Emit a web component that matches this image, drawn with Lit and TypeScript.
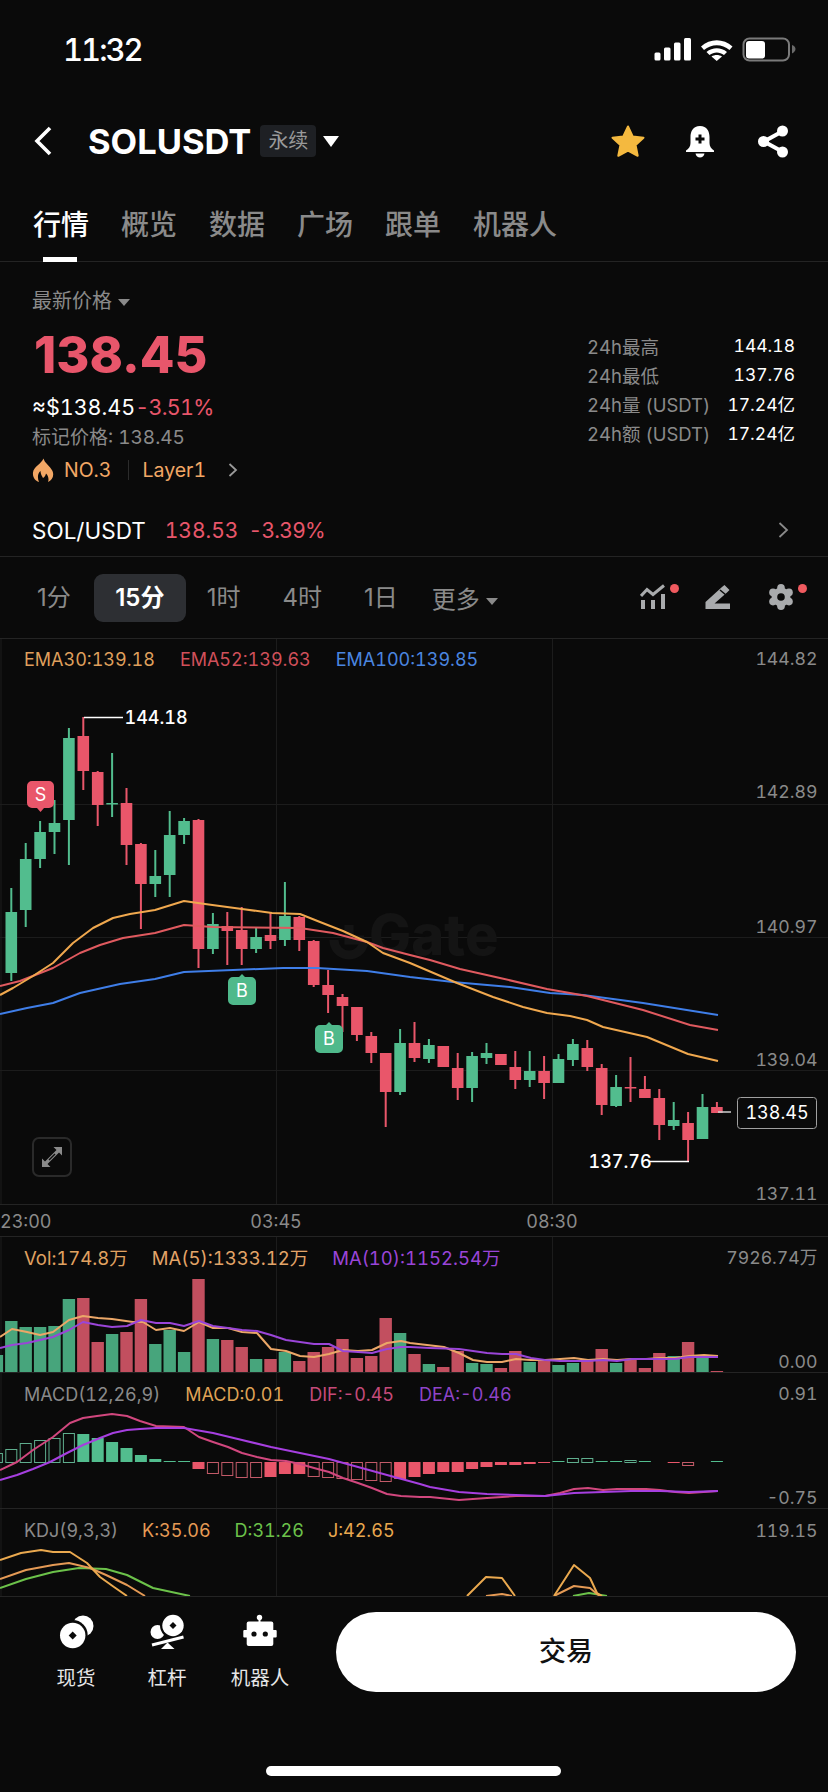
import { css, html, svg, LitElement } from "lit";
import { customElement } from "lit/decorators.js";

const UP = "#52bd8e";
const DOWN = "#e9566a";
const slotX = (i: number) => 11.3 + 14.4 * i;

// high, body top, body bottom, low, colour; index -1 is the cut off candle at the left edge
type Candle = [number, number, number, number, "g" | "r"];
const candles: Candle[] = [
  [888, 912, 973, 981, "g"], [843, 859, 910, 927, "g"], [821, 832, 859, 868, "g"], [800, 823, 832, 854, "g"],
  [728, 738, 820, 865, "g"], [717, 736, 771, 790, "r"], [771, 772, 805, 826, "r"], [753, 803, 804, 817, "g"],
  [788, 803, 845, 865, "r"], [843, 844, 884, 929, "r"], [850, 876, 884, 897, "g"], [811, 835, 875, 897, "g"],
  [818, 821, 835, 844, "g"], [819, 820, 949, 968, "r"], [913, 924, 949, 954, "g"], [912, 926, 931, 965, "r"],
  [907, 930, 949, 965, "r"], [927, 937, 949, 953, "g"], [913, 935, 941, 949, "r"], [882, 916, 940, 946, "g"],
  [916, 917, 940, 951, "r"], [940, 941, 985, 987, "r"], [970, 985, 995, 1013, "r"], [994, 997, 1006, 1032, "r"],
  [1007, 1007, 1035, 1041, "r"], [1032, 1036, 1053, 1063, "r"], [1053, 1053, 1092, 1127, "r"], [1029, 1043, 1092, 1095, "g"],
  [1022, 1043, 1058, 1062, "r"], [1039, 1045, 1059, 1063, "g"], [1046, 1046, 1067, 1067, "r"], [1053, 1068, 1088, 1100, "r"],
  [1052, 1056, 1088, 1102, "g"], [1043, 1053, 1058, 1064, "g"], [1054, 1054, 1065, 1065, "r"], [1051, 1067, 1080, 1089, "r"],
  [1051, 1071, 1080, 1087, "g"], [1056, 1071, 1083, 1099, "r"], [1054, 1059, 1083, 1083, "g"], [1039, 1044, 1060, 1066, "g"],
  [1040, 1048, 1067, 1071, "r"], [1064, 1068, 1105, 1115, "r"], [1075, 1087, 1106, 1107, "g"], [1057, 1087, 1088, 1102, "r"],
  [1076, 1089, 1098, 1098, "r"], [1089, 1098, 1125, 1140, "r"], [1102, 1120, 1126, 1130, "g"], [1112, 1123, 1140, 1161, "r"],
  [1094, 1107, 1139, 1139, "g"], [1102, 1107, 1113, 1113, "r"],
];

const ema30 = "0,995 13,988 33,976 53,963 73,943 93,928 113,918 130,914 155,910 184,901 205,904 242,909 272,913 300,914 320,922 343,931 367,942 383,953 410,963 457,983 493,997 523,1007 547,1013 570,1016 587,1020 603,1027 647,1037 688,1054 718,1061";
const ema52 = "0,986 20,981 53,968 80,953 100,945 123,938 155,933 184,925 213,927 300,928 333,933 367,942 383,948 410,955 430,960 460,969 500,978 547,989 587,996 643,1010 690,1025 718,1030";
const ema100 = "0,1014 27,1008 53,1003 80,993 120,984 155,979 184,972 233,970 283,968 317,968 367,971 410,977 453,982 510,987 550,993 583,995 643,1003 718,1015";

// volume bar tops, from slot -1 on
const volTops: [number, "g" | "r"][] = [
  [1355, "g"], [1321, "g"], [1327, "g"], [1327, "g"], [1326, "g"], [1299, "g"], [1298, "r"], [1342, "r"], [1334, "g"], [1332, "r"],
  [1299, "r"], [1344, "g"], [1330, "g"], [1352, "g"], [1279, "r"], [1339, "g"], [1340, "r"], [1347, "r"], [1359, "g"], [1359, "r"],
  [1352, "g"], [1361, "r"], [1352, "r"], [1347, "r"], [1339, "r"], [1358, "r"], [1356, "r"], [1318, "r"], [1333, "g"], [1354, "r"],
  [1364, "g"], [1367, "r"], [1351, "r"], [1363, "g"], [1364, "g"], [1368, "r"], [1351, "r"], [1362, "g"], [1360, "r"], [1365, "g"],
  [1363, "g"], [1360, "r"], [1349, "r"], [1363, "g"], [1359, "r"], [1368, "r"], [1353, "r"], [1356, "g"], [1342, "r"], [1358, "g"], [1371, "r"],
];
const volMa5 = "0,1337 12,1329 27,1332 40,1335 53,1332 69,1320 83,1316 98,1318 112,1319 133,1322 143,1322 156,1330 170,1328 184,1331 199,1322 213,1328 228,1328 242,1332 257,1333 271,1349 286,1351 300,1356 314,1357 329,1354 343,1350 358,1351 372,1350 387,1343 401,1341 410,1343 427,1345 444,1347 459,1353 473,1360 487,1362 502,1362 516,1359 531,1360 545,1360 560,1359 574,1358 588,1360 603,1359 617,1360 632,1359 646,1359 660,1358 675,1358 689,1356 704,1355 718,1356";
const volMa10 = "0,1348 12,1345 27,1343 40,1340 53,1337 69,1330 83,1322 98,1325 112,1327 127,1326 141,1320 156,1323 170,1323 184,1326 199,1321 213,1326 228,1328 242,1330 257,1331 271,1335 286,1340 300,1342 314,1344 329,1344 343,1351 358,1352 372,1353 387,1349 401,1347 410,1347 430,1348 459,1349 473,1351 487,1353 502,1354 516,1354 531,1358 545,1360 560,1361 574,1361 588,1361 603,1360 617,1361 632,1359 646,1359 660,1359 675,1359 689,1357 704,1357 718,1357";

// macd histogram: slot, y edge away from the zero line, hollow
const macdBars: [number, number, boolean][] = [
  [-1, 1453, true], [0, 1449, true], [1, 1443, true], [2, 1440, true], [3, 1438, true], [4, 1433, true], [5, 1434, false], [6, 1438, false],
  [7, 1442, false], [8, 1448, false], [9, 1455, false], [10, 1459, false], [11, 1461, false], [12, 1461, false],
  [13, 1469, false], [14, 1473, true], [15, 1475, true], [16, 1477, true], [17, 1477, true], [18, 1477, false], [19, 1474, false], [20, 1474, false],
  [21, 1476, true], [22, 1477, true], [23, 1478, true], [24, 1479, true], [25, 1480, true], [26, 1481, true], [27, 1479, false], [28, 1477, false],
  [29, 1474, false], [30, 1472, false], [31, 1472, false], [32, 1469, false], [33, 1467, false], [34, 1465, false], [35, 1465, false], [36, 1464, false], [37, 1463, false],
  [38, 1461, false], [39, 1458, true], [40, 1458, true], [41, 1461, false], [42, 1461, false], [43, 1460, true], [44, 1461, false],
  [46, 1463, false], [47, 1465, true], [49, 1461, false],
];
const macdDif = "0,1470 17,1462 33,1450 53,1437 70,1423 83,1418 97,1416 112,1414 127,1416 140,1421 156,1426 184,1427 199,1437 213,1442 228,1447 242,1453 257,1457 271,1460 286,1461 300,1464 314,1468 329,1472 343,1478 358,1483 372,1488 387,1494 401,1496 420,1497 430,1497 459,1500 487,1498 516,1496 545,1496 560,1493 574,1489 588,1488 603,1490 617,1489 646,1489 660,1490 675,1492 689,1493 718,1491";
const macdDea = "0,1480 17,1475 33,1469 50,1462 67,1453 83,1445 100,1438 113,1433 127,1430 140,1429 156,1428 184,1428 213,1433 242,1440 271,1447 300,1453 329,1459 358,1467 387,1475 420,1484 430,1487 459,1492 487,1494 516,1495 545,1496 574,1493 603,1492 631,1491 660,1491 689,1492 718,1491";

const kdjJ = ["0,1560 21,1553 41,1550 53,1552 70,1552 87,1563 100,1577 114,1587 127,1596", "467,1596 486,1577 502,1578 515,1596", "554,1596 574,1565 590,1578 597,1593 602,1596"];
const kdjK = ["0,1579 26,1570 53,1565 69,1563 90,1568 106,1575 127,1585 145,1596", "486,1596 502,1594 512,1596", "554,1596 574,1586 590,1588 597,1594 600,1596"];
const kdjD = ["0,1588 26,1579 53,1572 79,1568 106,1569 127,1575 153,1588 190,1596", "573,1596 589,1593 607,1596"];

@customElement("app-root")
export class AppRoot extends LitElement {
  renderStatus() {
    return html`
      <div class="status">
        <span class="clock">11:32</span>
        <svg width="142" height="26" viewBox="653 37 142 26">
          <g fill="#fff">
            <rect x="653.5" y="52.5" width="6" height="8" rx="1.5" />
            <rect x="663" y="47.5" width="6.5" height="13" rx="1.5" />
            <rect x="673" y="42.5" width="6.5" height="18" rx="1.5" />
            <rect x="683" y="38" width="7" height="22.5" rx="1.5" />
            <path d="M700 46.5C709 38 722.500 38 731.500 46.500L728.500 50C721 43.500 710.500 43.500 703 50Z" />
            <path d="M705.500 52C711.500 47 720 47 726 52L723 55C718.500 51.500 713 51.500 708.500 55Z" />
            <path d="M710.500 56.500C713.500 54.500 718 54.500 721 56.500L715.700 61Z" />
            <rect x="745" y="41" width="19" height="17.500" rx="3" />
          </g>
          <rect x="742.500" y="38.500" width="45.500" height="22" rx="6" fill="none" stroke="#7a7a7a" stroke-width="2" />
          <path d="M791 45C793.500 46 794.500 47.500 794.500 49S793.500 52 791 53.500Z" fill="#6a6a6a" />
        </svg>
      </div>
    `;
  }

  renderHeader() {
    return html`
      <div class="header">
        <svg class="back" width="20" height="30" viewBox="0 0 20 30">
          <path d="M17 2L4 15L17 28" fill="none" stroke="#fff" stroke-width="3.600" />
        </svg>
        <span class="symbol">SOLUSDT</span>
        <span class="badge">永续</span>
        <span class="caret big"></span>
        <span class="spacer"></span>
        <svg width="34" height="33" viewBox="0 0 34 33">
          <path d="M17 1.500L21.700 11.400L32.500 12.700L24.600 20.100L26.700 30.800L17 25.500L7.300 30.800L9.400 20.100L1.500 12.700L12.300 11.400Z" fill="#f4b93f" stroke="#f4b93f" stroke-width="2" stroke-linejoin="round" />
        </svg>
        <svg class="bell" width="30" height="33" viewBox="0 0 30 33">
          <path d="M15 1C22 1 24.500 6.500 24.500 12V18C24.500 21 26 23.500 29 25.500V27H1V25.500C4 23.500 5.500 21 5.500 18V12C5.500 6.500 8 1 15 1Z" fill="#fff" />
          <path d="M10.500 28.500H19.500C19 31 17.200 32.500 15 32.500S11 31 10.500 28.500Z" fill="#fff" />
          <path d="M15 9.500V18.500M10.500 14H19.500" stroke="#0a0a0a" stroke-width="3" />
        </svg>
        <svg class="share" width="32" height="33" viewBox="0 0 32 33">
          <path d="M26 6L7 16.500L26 27" fill="none" stroke="#fff" stroke-width="4" />
          <circle cx="25.500" cy="6" r="5.500" fill="#fff" />
          <circle cx="6.500" cy="16.500" r="5.500" fill="#fff" />
          <circle cx="25.500" cy="27" r="5.500" fill="#fff" />
        </svg>
      </div>
    `;
  }

  renderTabs() {
    const tabs = ["行情", "概览", "数据", "广场", "跟单", "机器人"];
    return html`
      <div class="tabs">
        ${tabs.map((t, i) => html`<span class="tab ${i === 0 ? "on" : ""}">${t}</span>`)}
      </div>
    `;
  }

  renderInfo() {
    const stats = [
      ["24h最高", "144.18"],
      ["24h最低", "137.76"],
      ["24h量 (USDT)", "17.24亿"],
      ["24h额 (USDT)", "17.24亿"],
    ];
    return html`
      <div class="info">
        <div class="info-left">
          <div class="latest">最新价格<span class="caret small"></span></div>
          <div class="price">138.45</div>
          <div class="usd">≈$138.45<span class="red pct">-3.51%</span></div>
          <div class="mark">标记价格: 138.45</div>
          <div class="tags">
            <svg width="22" height="24" viewBox="0 0 22 24">
              <path d="M11.500 0.500C12.500 5 18 8 20.500 13C22.500 18 20 22 16 24C17 21 16.500 18 14 15.500C13.500 18 12.500 19 11 20C10 18 8.500 16 8.500 13C6 15 5 19 7 24C3 22.500 0.500 19 1 14.500C1.500 9 9 6 11.500 0.500Z" fill="#f2a765" />
            </svg>
            <span class="no">NO.3</span>
            <span class="sep"></span>
            <span>Layer1</span>
            <svg class="tag-arrow" width="10" height="14" viewBox="0 0 10 14">
              <path d="M1.500 1L8 7L1.500 13" fill="none" stroke="#9a9a9a" stroke-width="1.800" />
            </svg>
          </div>
        </div>
        <div class="stats">
          ${stats.map(
            ([k, v]) => html`<div class="stat"><span class="k">${k}</span><span class="v">${v}</span></div>`
          )}
        </div>
      </div>
    `;
  }

  renderMarket() {
    return html`
      <div class="market">
        <span class="pair">SOL/USDT</span>
        <span class="red">138.53</span>
        <span class="red pct">-3.39%</span>
        <span class="spacer"></span>
        <svg width="11" height="16" viewBox="0 0 11 16">
          <path d="M1.500 1L9 8L1.500 15" fill="none" stroke="#8a8a8a" stroke-width="1.800" />
        </svg>
      </div>
    `;
  }

  renderToolbar() {
    return html`
      <div class="toolbar">
        <span class="tf">1分</span>
        <span class="tf active">15分</span>
        <span class="tf">1时</span>
        <span class="tf">4时</span>
        <span class="tf">1日</span>
        <span class="more">更多<span class="caret small"></span></span>
        <span class="spacer"></span>
        <span class="tool t1">
          <svg width="26" height="26" viewBox="0 0 26 26">
            <path d="M1 12L7 5.500L13 10.500L24 1.500" fill="none" stroke="#a9abad" stroke-width="3" />
            <path d="M3 16V25M13 16V25M23 10V25" fill="none" stroke="#a9abad" stroke-width="4" />
          </svg>
          <i class="dot"></i>
        </span>
        <span class="tool t2">
          <svg width="26" height="26" viewBox="0 0 26 26">
            <path d="M0.500 24V18L17 3L19.500 1L24.500 6L22 8.500L9.500 19.500H25V25H0.500Z" fill="#a9abad" />
            <path d="M15 6L21 11" stroke="#0a0a0a" stroke-width="1.500" />
          </svg>
        </span>
        <span class="tool t3">
          <svg width="26" height="26" viewBox="0 0 26 26">
            <g fill="#a9abad">
              <circle cx="13" cy="13" r="9.500" />
              <circle cx="13" cy="3.800" r="3.800" />
              <circle cx="13" cy="22.200" r="3.800" />
              <circle cx="5" cy="8.400" r="3.800" />
              <circle cx="21" cy="8.400" r="3.800" />
              <circle cx="5" cy="17.600" r="3.800" />
              <circle cx="21" cy="17.600" r="3.800" />
            </g>
            <circle cx="13" cy="13" r="3.800" fill="#0a0a0a" />
          </svg>
          <i class="dot"></i>
        </span>
      </div>
    `;
  }

  renderCandles() {
    return candles.map(([hi, top, bottom, lo, c], i) => {
      const x = slotX(i);
      const col = c === "g" ? UP : DOWN;
      return svg`
        <line x1=${x} x2=${x} y1=${hi} y2=${lo} stroke=${col} stroke-width="2" />
        <rect x=${x - 5.8} y=${top} width="11.600" height=${Math.max(bottom - top, 1.5)} fill=${col} />
      `;
    });
  }

  renderMainChart() {
    return html`
      <div class="panel main">
        <svg width="828" height="565" viewBox="0 639 828 565">
          <g class="grid">
            <path d="M0 804.500H828M0 937.500H828M0 1070.500H828M276.500 639V1204M552.500 639V1204M1 639V1204" />
          </g>
          <g>
            <path d="M334 940A15 15 0 0 0 364 940" fill="none" stroke="#141414" stroke-width="9" />
            <path d="M349 925V940H364" fill="none" stroke="#141414" stroke-width="9" />
            <text x="369" y="955" class="watermark">Gate</text>
          </g>
          ${this.renderCandles()}
          <polyline points=${ema100} class="ln" stroke="#3f7ee8" />
          <polyline points=${ema52} class="ln" stroke="#e05a5f" />
          <polyline points=${ema30} class="ln" stroke="#f0a84e" />

          <path d="M84 717.500H123" stroke="#fff" stroke-width="1.500" />
          <text x="124.500" y="717.500" class="note">144.18</text>
          <path d="M649 1161.500H689" stroke="#fff" stroke-width="1.500" />
          <text x="588.500" y="1161.500" class="note">137.76</text>

          <path d="M32 781H49A5 5 0 0 1 54 786V803A5 5 0 0 1 49 808H44L40.500 812L37 808H32A5 5 0 0 1 27 803V786A5 5 0 0 1 32 781Z" fill=${DOWN} />
          <text x="40.500" y="794.500" class="tag-text">S</text>
          <path d="M233 977H239L242 974L245 977H251A5 5 0 0 1 256 982V1000A5 5 0 0 1 251 1005H233A5 5 0 0 1 228 1000V982A5 5 0 0 1 233 977Z" fill="#4fb98b" />
          <text x="242" y="990.500" class="tag-text">B</text>
          <path d="M320 1025H326L329 1022L332 1025H338A5 5 0 0 1 343 1030V1048A5 5 0 0 1 338 1053H320A5 5 0 0 1 315 1048V1030A5 5 0 0 1 320 1025Z" fill="#4fb98b" />
          <text x="329" y="1038.500" class="tag-text">B</text>

          <text x="817.500" y="658" class="axis">144.82</text>
          <text x="817.500" y="791" class="axis">142.89</text>
          <text x="817.500" y="926" class="axis">140.97</text>
          <text x="817.500" y="1059" class="axis">139.04</text>
          <text x="817.500" y="1193" class="axis">137.11</text>

          <path d="M718 1112H731" stroke="#cfcfcf" stroke-width="1.500" />
          <rect x="737.500" y="1097.500" width="79" height="31" rx="3" fill="#0a0a0a" stroke="#a0a0a0" />
          <text x="777" y="1112.500" class="tag-text">138.45</text>
        </svg>
        <div class="legend">
          <span style="color:#df9f5c">EMA30:139.18</span>
          <span style="color:#d0505a">EMA52:139.63</span>
          <span style="color:#4a86e0">EMA100:139.85</span>
        </div>
        <div class="expand">
          <svg width="22" height="22" viewBox="0 0 22 22">
            <path d="M12.500 1H21V9.500L18 6.500L6.500 18L9.500 21H1V12.500L4 15.500L15.500 4Z" fill="#8a8a8a" />
            <path d="M8 14L14 8" stroke="#0a0a0a" stroke-width="1.500" />
          </svg>
        </div>
      </div>
    `;
  }

  renderTimeAxis() {
    return html`
      <div class="time-axis">
        <span class="t0">23:00</span>
        <span>03:45</span>
        <span>08:30</span>
      </div>
    `;
  }

  renderVolume() {
    return html`
      <div class="panel vol">
        <svg width="828" height="135" viewBox="0 1237 828 135">
          <path class="grid-p" d="M276.500 1237V1372M552.500 1237V1372M1 1237V1372" />
          ${volTops.map(([top, c], i) => {
            const x = slotX(i - 1) - 6.2;
            return svg`<rect x=${x} y=${top} width="12.400" height=${1372 - top} fill=${c === "g" ? "#47a57c" : "#c24f5f"} />`;
          })}
          <polyline points=${volMa5} class="ln" stroke="#eba768" />
          <polyline points=${volMa10} class="ln" stroke="#9a45d8" />
          <text x="817.500" y="1257" class="axis">7926.74万</text>
          <text x="817.500" y="1361" class="axis">0.00</text>
        </svg>
        <div class="legend">
          <span style="color:#e0a261">Vol:174.8万</span>
          <span style="color:#e3a468">MA(5):1333.12万</span>
          <span style="color:#9a45d8">MA(10):1152.54万</span>
        </div>
      </div>
    `;
  }

  renderMacd() {
    return html`
      <div class="panel macd">
        <svg width="828" height="135" viewBox="0 1373 828 135">
          <path class="grid-p" d="M276.500 1373V1508M552.500 1373V1508M1 1373V1508" />
          ${macdBars.map(([slot, edge, hollow]) => {
            const x = slotX(slot) - 6;
            const up = edge < 1462;
            const col = up ? UP : DOWN;
            const y = up ? edge : 1462;
            const h = Math.max(Math.abs(edge - 1462), 1);
            return hollow
              ? svg`<rect x=${x + 0.5} y=${y + 0.5} width="11" height=${h} fill="none" stroke=${up ? "#5fae8e" : "#c25a68"} />`
              : svg`<rect x=${x} y=${y} width="12" height=${h} fill=${col} />`;
          })}
          <polyline points=${macdDif} class="ln" stroke="#d1477e" />
          <polyline points=${macdDea} class="ln" stroke="#a63fe0" />
          <text x="817.500" y="1393" class="axis">0.91</text>
          <text x="817.500" y="1497" class="axis">-0.75</text>
        </svg>
        <div class="legend">
          <span style="color:#8a8a8a">MACD(12,26,9)</span>
          <span style="color:#dfa256">MACD:0.01</span>
          <span style="color:#c44a7a">DIF:-0.45</span>
          <span style="color:#8e44c8">DEA:-0.46</span>
        </div>
      </div>
    `;
  }

  renderKdj() {
    return html`
      <div class="panel kdj">
        <svg width="828" height="87" viewBox="0 1509 828 87">
          <path class="grid-p" d="M276.500 1509V1596M552.500 1509V1596M1 1509V1596" />
          ${kdjD.map((p) => svg`<polyline points=${p} class="ln" stroke="#6cc24a" />`)}
          ${kdjK.map((p) => svg`<polyline points=${p} class="ln" stroke="#e59a55" />`)}
          ${kdjJ.map((p) => svg`<polyline points=${p} class="ln" stroke="#eaa94f" />`)}
          <text x="817.500" y="1530" class="axis">119.15</text>
        </svg>
        <div class="legend">
          <span style="color:#8a8a8a">KDJ(9,3,3)</span>
          <span style="color:#e59a55">K:35.06</span>
          <span style="color:#6cc24a">D:31.26</span>
          <span style="color:#e9a84f">J:42.65</span>
        </div>
      </div>
    `;
  }

  renderBottom() {
    return html`
      <div class="bottom">
        <div class="actions">
          <div class="action a1">
            <svg width="36" height="36" viewBox="58 1615 36 36">
              <circle cx="83" cy="1627" r="10.500" fill="#fff" />
              <circle cx="72.700" cy="1636" r="15" fill="#0a0a0a" />
              <circle cx="72.700" cy="1636.500" r="12.700" fill="#fff" />
              <path d="M72.700 1632.500L76.700 1636.500L72.700 1640.500L68.700 1636.500Z" fill="#0a0a0a" />
            </svg>
            <span>现货</span>
          </div>
          <div class="action a2">
            <svg width="36" height="36" viewBox="150 1615 36 36">
              <circle cx="158.500" cy="1633" r="7" fill="#fff" />
              <circle cx="174" cy="1626.500" r="13" fill="#0a0a0a" />
              <circle cx="174" cy="1626.500" r="10.700" fill="#fff" />
              <path d="M174 1623L177.500 1626.500L174 1630L170.500 1626.500Z" fill="#0a0a0a" />
              <path d="M153 1646L184.500 1638" stroke="#fff" stroke-width="3" />
              <path d="M168.500 1643.500L175.500 1650H162Z" fill="#fff" />
            </svg>
            <span>杠杆</span>
          </div>
          <div class="action a3">
            <svg width="36" height="36" viewBox="242 1614 36 36">
              <circle cx="259.500" cy="1617.500" r="2.700" fill="#fff" />
              <path d="M258.500 1618H260.500V1622H258.500Z" fill="#fff" />
              <rect x="246.700" y="1621.500" width="26.600" height="24.500" rx="2" fill="#fff" />
              <rect x="243.300" y="1630" width="33.400" height="7.500" rx="1" fill="#fff" />
              <circle cx="254" cy="1634" r="2.600" fill="#0a0a0a" />
              <circle cx="265.300" cy="1634" r="2.600" fill="#0a0a0a" />
            </svg>
            <span>机器人</span>
          </div>
          <div class="trade">交易</div>
        </div>
        <div class="home"></div>
      </div>
    `;
  }

  render() {
    return html`
      ${this.renderStatus()} ${this.renderHeader()} ${this.renderTabs()} ${this.renderInfo()}
      ${this.renderMarket()} ${this.renderToolbar()} ${this.renderMainChart()} ${this.renderTimeAxis()}
      ${this.renderVolume()} ${this.renderMacd()} ${this.renderKdj()} ${this.renderBottom()}
    `;
  }

  static styles = css`
    :host {
      display: block;
      width: 828px;
      height: 1792px;
      overflow: hidden;
      background: #0a0a0a;
      color: #fff;
      font-family: Inter, "Noto Sans CJK SC", sans-serif;
      font-variant-numeric: tabular-nums;
      --line: #242424;
      --muted: #8a8a8a;
      --red: #e8566b;
    }
    svg {
      display: block;
      flex: none;
    }
    .spacer {
      flex: 1;
    }
    .red {
      color: var(--red);
    }
    .pct {
      letter-spacing: -0.7px;
    }
    .caret {
      display: inline-block;
      width: 0;
      height: 0;
      border-style: solid;
      border-color: currentColor transparent transparent;
    }
    .caret.big {
      margin-left: 7px;
      border-width: 11px 8px 0;
      color: #fff;
    }
    .caret.small {
      margin-left: 6px;
      border-width: 7px 6px 0;
      vertical-align: middle;
    }

    .status {
      height: 100px;
      box-sizing: border-box;
      padding: 36px 0 0 63px;
      display: flex;
      justify-content: space-between;
    }
    .clock {
      font-size: 31px;
      font-weight: 500;
      line-height: 28px;
      letter-spacing: -2px;
    }
    .status svg {
      margin: 1px 32px 0 0;
    }

    .header {
      height: 80px;
      box-sizing: border-box;
      padding: 2px 39px 0 33px;
      display: flex;
      align-items: center;
    }
    .symbol {
      margin-left: 35px;
      font-size: 34.500px;
      font-weight: 700;
    }
    .badge {
      margin-left: 9px;
      width: 56px;
      height: 32px;
      background: #1e2024;
      border-radius: 4px;
      color: #9a9a9a;
      font-size: 20px;
      line-height: 32px;
      text-align: center;
    }
    .bell {
      margin-left: 40px;
    }
    .share {
      margin-left: 42px;
    }

    .tabs {
      height: 82px;
      box-sizing: border-box;
      border-bottom: 1px solid var(--line);
      padding: 25px 0 0 33px;
      display: flex;
      gap: 32px;
    }
    .tab {
      position: relative;
      height: 40px;
      font-size: 28px;
      line-height: 40px;
      color: #8a8a8a;
      font-weight: 500;
    }
    .tab.on {
      color: #fff;
    }
    .tab.on::after {
      content: "";
      position: absolute;
      left: 10px;
      right: 12px;
      top: 52px;
      height: 5px;
      background: #fff;
    }

    .info {
      height: 238px;
      box-sizing: border-box;
      padding: 25px 33px 0 32px;
      display: flex;
      justify-content: space-between;
    }
    .latest {
      height: 28px;
      font-size: 20px;
      line-height: 28px;
      color: var(--muted);
    }
    .price {
      margin: 10px 0 0 2px;
      height: 60px;
      font-size: 50.500px;
      font-weight: 800;
      line-height: 60px;
      color: var(--red);
      font-variant-numeric: normal;
    }
    .usd {
      margin-top: 7px;
      height: 30px;
      font-size: 21.500px;
      line-height: 30px;
    }
    .mark {
      margin-top: 2px;
      height: 28px;
      font-size: 19px;
      line-height: 28px;
      color: var(--muted);
    }
    .tags {
      margin-top: 4px;
      height: 28px;
      display: flex;
      align-items: center;
      font-size: 19.500px;
      color: #f2a765;
    }
    .no {
      margin-left: 10px;
    }
    .sep {
      width: 1px;
      height: 20px;
      margin: 0 13px 0 17px;
      background: #2c2c2c;
    }
    .tag-arrow {
      margin-left: 22px;
    }
    .stats {
      width: 208px;
      margin-top: 44px;
    }
    .stat {
      height: 29px;
      display: flex;
      justify-content: space-between;
      align-items: center;
      font-size: 18.500px;
      white-space: nowrap;
    }
    .v {
      font-size: 17.500px;
    }
    .k {
      color: var(--muted);
    }

    .market {
      height: 57px;
      box-sizing: border-box;
      border-bottom: 1px solid var(--line);
      padding: 4px 39px 0 32px;
      display: flex;
      align-items: center;
      font-size: 21px;
      gap: 10px;
    }
    .pair {
      margin-right: 9px;
      font-size: 22.500px;
    }

    .toolbar {
      height: 82px;
      box-sizing: border-box;
      border-bottom: 1px solid var(--line);
      padding-left: 16px;
      display: flex;
      align-items: center;
      font-size: 24px;
      color: #8a8a8a;
      font-variant-numeric: normal;
    }
    .tf {
      padding: 0 21px;
      line-height: 48px;
    }
    .tf.active {
      margin-left: 2px;
      padding: 0;
      width: 92px;
      text-align: center;
      background: #2d2f33;
      border-radius: 9px;
      color: #fff;
      font-weight: 600;
    }
    .more {
      margin-left: 13px;
    }
    .tool {
      position: relative;
      display: block;
    }
    .tool svg {
      margin-bottom: 2px;
    }
    .t1 {
      margin-right: 39px;
    }
    .t2 {
      margin-right: 37px;
    }
    .t3 {
      margin-right: 34px;
    }
    .dot {
      position: absolute;
      top: 0;
      right: -13px;
      width: 9px;
      height: 9px;
      border-radius: 50%;
      background: #f05a5f;
    }

    .panel {
      position: relative;
      border-bottom: 1px solid var(--line);
      overflow: hidden;
    }
    .panel.main {
      height: 565px;
    }
    .panel.vol,
    .panel.macd {
      height: 135px;
    }
    .panel.kdj {
      height: 87px;
    }
    .legend {
      position: absolute;
      left: 24px;
      top: 9px;
      height: 24px;
      display: flex;
      gap: 25px;
      align-items: center;
      font-size: 18px;
      white-space: nowrap;
    }
    .main .legend {
      top: 8px;
    }
    .vol .legend {
      top: 8px;
      gap: 24px;
      font-size: 18.500px;
    }
    .kdj .legend {
      gap: 24px;
    }
    .expand {
      position: absolute;
      left: 32px;
      top: 498px;
      width: 40px;
      height: 40px;
      box-sizing: border-box;
      border: 2px solid #2a2a2a;
      border-radius: 7px;
      display: flex;
      align-items: center;
      justify-content: center;
    }
    .grid path,
    .grid-p {
      fill: none;
      stroke: #1c1c1c;
      stroke-width: 1;
    }
    .ln {
      fill: none;
      stroke-width: 2;
      stroke-linejoin: round;
    }
    .axis {
      fill: #8a8a8a;
      font-size: 17.700px;
      text-anchor: end;
      dominant-baseline: central;
    }
    .note {
      fill: #fff;
      font-size: 18px;
      font-weight: 500;
      dominant-baseline: central;
    }
    .tag-text {
      fill: #fff;
      font-size: 18px;
      text-anchor: middle;
      dominant-baseline: central;
    }
    .watermark {
      fill: #141414;
      font-size: 56px;
      font-weight: 800;
    }

    .time-axis {
      height: 32px;
      box-sizing: border-box;
      border-bottom: 1px solid var(--line);
      font-size: 18px;
      line-height: 34px;
      color: #8a8a8a;
      display: grid;
      grid-template-columns: 276px 276px 276px;
    }
    .time-axis span {
      transform: translateX(-50%);
      width: max-content;
    }
    .time-axis .t0 {
      transform: none;
    }

    .bottom {
      height: 195px;
      box-sizing: border-box;
      padding-top: 15px;
    }
    .actions {
      height: 154px;
      display: flex;
      align-items: flex-start;
    }
    .action {
      display: flex;
      flex-direction: column;
      align-items: center;
      font-size: 19.500px;
      line-height: 28px;
      color: #e6e6e6;
    }
    .action svg {
      margin: 2px 0 14px;
    }
    .a1 {
      margin-left: 33px;
      width: 86px;
    }
    .a2 {
      width: 96px;
    }
    .a3 {
      width: 90px;
    }
    .trade {
      margin-left: 31px;
      width: 460px;
      height: 80px;
      border-radius: 40px;
      background: #fff;
      color: #111;
      font-size: 27px;
      font-weight: 500;
      line-height: 80px;
      text-align: center;
    }
    .home {
      width: 295px;
      height: 10px;
      margin-left: 266px;
      border-radius: 5px;
      background: #fff;
    }
  `;
}
